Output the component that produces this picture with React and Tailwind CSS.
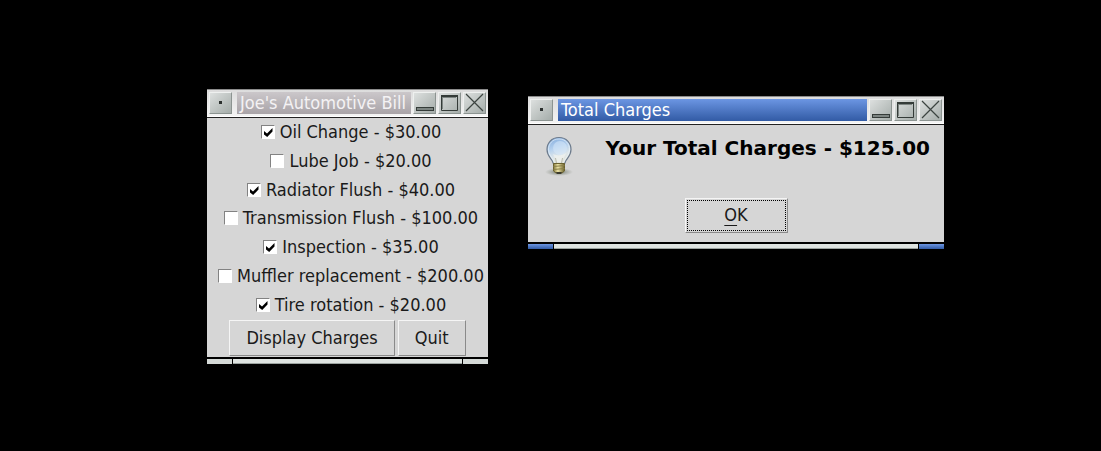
import React from "react";

const services = [
  { name: "Oil Change - $30.00", checked: true },
  { name: "Lube Job - $20.00", checked: false },
  { name: "Radiator Flush - $40.00", checked: true },
  { name: "Transmission Flush - $100.00", checked: false },
  { name: "Inspection - $35.00", checked: true },
  { name: "Muffler replacement - $200.00", checked: false },
  { name: "Tire rotation - $20.00", checked: true },
];

const glyphs = {
  menu: <rect x="10" y="9" width="3" height="3" fill="#2b302e" />,
  minimize: <rect x="3.5" y="15.5" width="17" height="3" fill="#7d8582" stroke="#343b38" />,
  maximize: (
    <g fill="none">
      <path d="M4 5.500h14M4.500 5v12" stroke="#7d8582" />
      <path d="M3.500 3.500h16v15h-16z" stroke="#343b38" />
      <path d="M3 4h17" stroke="#343b38" strokeWidth="2" />
    </g>
  ),
  close: <path d="M3 2l17 17M20 2L3 19" fill="none" stroke="#3c4441" strokeWidth="1.200" />,
};

function TitleButton({ kind, label }) {
  return (
    <button
      type="button"
      aria-label={label}
      className="h-[22px] w-[23px] shrink-0 border border-t-[#eef0ef] border-l-[#eef0ef] border-r-[#8c9491] border-b-[#8c9491] bg-linear-to-br from-[#dde0df] to-[#a5adaa]"
    >
      <svg viewBox="1 1 21 20" className="block h-full w-full" aria-hidden="true">
        {glyphs[kind]}
      </svg>
    </button>
  );
}

function TitleBar({ title, active }) {
  const tone = active
    ? "from-[#6c96e3] to-[#325ba5] text-white"
    : "from-[#cbc7ca] to-[#a9a4a8] text-[#f4f2f4]";
  return (
    <header className="flex h-[28px] items-center gap-[2px] border-t border-b border-t-[#8b8b8b] border-b-white bg-linear-to-b from-[#dcdcdc] to-[#f4f4f4] px-[2px]">
      <TitleButton kind="menu" label="Window menu" />
      <h1
        className={
          "ml-[3px] h-[22px] min-w-0 flex-1 overflow-hidden bg-linear-to-b pl-[3px] leading-[22px] whitespace-nowrap " +
          tone
        }
      >
        {title}
      </h1>
      <TitleButton kind="minimize" label="Minimize" />
      <TitleButton kind="maximize" label="Maximize" />
      <TitleButton kind="close" label="Close" />
    </header>
  );
}

function ResizeBar({ active }) {
  const corner = active
    ? "bg-linear-to-b from-[#6c96e3] to-[#325ba5]"
    : "bg-[#d5dad7]";
  return (
    <footer className="flex h-[7px] gap-px border-t-2 border-black bg-black">
      <div className={"w-[25px] " + corner} />
      <div className="flex-1 border-b border-[#9ca3a0] bg-[#dfe4e1]" />
      <div className={"w-[25px] " + corner} />
    </footer>
  );
}

function Service({ name, checked }) {
  return (
    <label className="flex items-center gap-[5px]">
      <span className="grid size-[14px] shrink-0">
        <input
          type="checkbox"
          defaultChecked={checked}
          className="peer col-start-1 row-start-1 size-[14px] appearance-none border border-t-[#828282] border-l-[#828282] border-r-white border-b-white bg-white"
        />
        <svg
          viewBox="0 0 14 14"
          aria-hidden="true"
          className="pointer-events-none invisible col-start-1 row-start-1 size-[14px] peer-checked:visible"
        >
          <path d="M3 6l3 2.500L11.500 3v3.500L6.200 12L3 9.500z" fill="#000" />
        </svg>
      </span>
      <span className="leading-[28px] whitespace-nowrap">{name}</span>
    </label>
  );
}

function Bulb() {
  return (
    <svg viewBox="0 0 36 44" className="h-[44px] w-[36px] shrink-0" aria-hidden="true">
      <defs>
        <linearGradient id="glass" x1="0" y1="0" x2=".3" y2="1">
          <stop offset="0" stopColor="#7fa9dc" />
          <stop offset=".45" stopColor="#b4d0ee" />
          <stop offset=".75" stopColor="#dde6ea" />
          <stop offset="1" stopColor="#e3e5dc" />
        </linearGradient>
        <linearGradient id="brass">
          <stop offset="0" stopColor="#81763a" />
          <stop offset=".4" stopColor="#eee5a8" />
          <stop offset="1" stopColor="#6a602b" />
        </linearGradient>
        <radialGradient id="shade">
          <stop offset="0" stopColor="#515c4c" stopOpacity=".75" />
          <stop offset="1" stopColor="#6b7566" stopOpacity="0" />
        </radialGradient>
      </defs>
      <ellipse cx="18" cy="37" rx="14" ry="4" fill="url(#shade)" />
      <path
        d="M18 2.500C10.500 2.500 6 8 6 14.500c0 5.500 3.200 8 5 11 1 1.700 1 3 2 4h10c1-1 1-2.300 2-4 1.800-3 5-5.500 5-11C30 8 25.500 2.500 18 2.500z"
        fill="url(#glass)"
        stroke="#6d7b8c"
        strokeWidth="1.200"
      />
      <path
        d="M18 4C11.500 4 7.500 8.800 7.500 14.500c0 4.800 3 7.500 4.800 10.500 1 1.600.9 2.800 1.500 3.500h8.400c.6-.7.5-1.900 1.500-3.500 1.800-3 4.800-5.700 4.800-10.500C28.500 8.800 24.500 4 18 4z"
        fill="none"
        stroke="#eff6fc"
        strokeOpacity=".6"
      />
      <circle cx="19" cy="13" r="7" fill="#d6e8fa" fillOpacity=".55" />
      <path d="M12 19c4 2 9 2 13-1-1 4-4 6-4 9h-6c0-3-2-5-3-8z" fill="#f3f5ef" fillOpacity=".65" />
      <path d="M15.500 28l-1-5M20.500 28l1-5" fill="none" stroke="#b9bcae" />
      <path d="M12.500 28.500h11v7.500l-2.500 2h-6l-2.500-2z" fill="url(#brass)" stroke="#6b6230" />
      <path d="M12.500 31.500l11-1M12.500 34.500l11-1" stroke="#8a8048" />
      <path d="M15 37h6l-1 2h-4z" fill="#3c3b2e" />
    </svg>
  );
}

const raised =
  "border-t-[#f5f5f5] border-l-[#f5f5f5] border-r-[#8a8a8a] border-b-[#8a8a8a] bg-[#d6d6d6]";

export default function App() {
  return (
    <main className="relative min-h-screen overflow-hidden bg-black font-['DejaVu_Sans_Condensed','DejaVu_Sans',sans-serif] text-[18px] text-[#1a1a1a]">
      <section className="absolute top-[89px] left-[207px] w-[281px] bg-[#d6d6d6]">
        <TitleBar title="Joe's Automotive Bill" active={false} />
        <div className="border-t border-[#222]">
          <div className="grid h-[201px] grid-rows-7 justify-items-center pl-[7px]">
            {services.map((service) => (
              <Service key={service.name} {...service} />
            ))}
          </div>
          <div className="flex justify-center gap-[3px] py-px">
            <button type="button" className={"h-[36px] border px-4 pb-px whitespace-nowrap " + raised}>
              Display Charges
            </button>
            <button type="button" className={"h-[36px] border px-4 pb-px whitespace-nowrap " + raised}>
              Quit
            </button>
          </div>
        </div>
        <ResizeBar active={false} />
      </section>

      <section className="absolute top-[96px] left-[528px] w-[416px] bg-[#d6d6d6]">
        <TitleBar title="Total Charges" active />
        <div className="border-t border-[#222]">
          <div className="flex items-start justify-between pt-[10px] pr-[14px] pl-[13px]">
            <Bulb />
            <p className="font-['DejaVu_Sans',sans-serif] text-[20px] leading-[26px] font-bold whitespace-nowrap text-black">
              Your Total Charges - $125.00
            </p>
          </div>
          <div className="flex justify-center pt-[19px] pb-[9px]">
            <button type="button" className={"h-[35px] w-[103px] border p-px " + raised}>
              <span className="flex h-full items-center justify-center border border-dotted border-black pb-[2px]">
                <span className="underline underline-offset-4">O</span>K
              </span>
            </button>
          </div>
        </div>
        <ResizeBar active />
      </section>
    </main>
  );
}
